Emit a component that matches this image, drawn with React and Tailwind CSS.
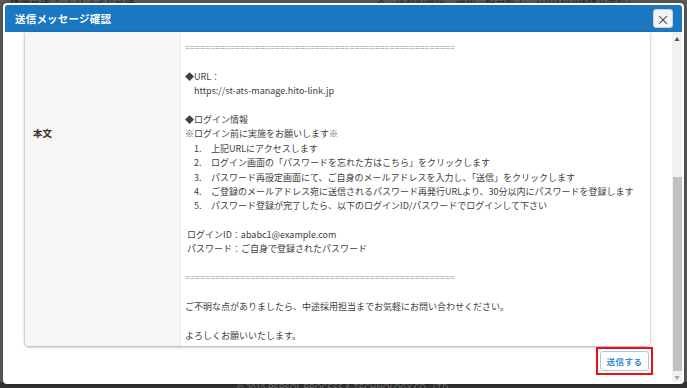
const EQ = '='.repeat(54);

const steps = [
  '上記URLにアクセスします',
  'ログイン画面の「パスワードを忘れた方はこちら」をクリックします',
  'パスワード再設定画面にて、ご自身のメールアドレスを入力し、「送信」をクリックします',
  'ご登録のメールアドレス宛に送信されるパスワード再発行URLより、30分以内にパスワードを登録します',
  'パスワード登録が完了したら、以下のログインID/パスワードでログインして下さい',
];

function Line({ children, className = '' }) {
  return <div className={`h-[14.4px] whitespace-nowrap ${className}`}>{children}</div>;
}

export default function App() {
  return (
    <div className="relative w-[687px] h-[388px] overflow-hidden bg-[#5b5b5b] font-['Noto_Sans_CJK_JP','Noto_Sans',sans-serif]">
      {/* page behind the overlay */}
      <div className="flex flex-col h-full">
        <div className="flex justify-between items-end h-[6px] px-[10px] text-[10px] leading-[12px] text-[#2b2b2b]">
          <span>採用管理 ・ アカウント管理</span>
          <span className="mr-[40px]">メール対応履歴　通知　担当者１　（HITO-Link株式会社）</span>
        </div>
        <div className="flex-1" />
        <div className="h-[6px] bg-[#333] text-[9px] leading-[12px] text-[#777] text-center">© 2015 PERSOL PROCESS &amp; TECHNOLOGY CO., LTD.</div>
      </div>

      {/* modal */}
      <div className="absolute left-[3px] top-[3px] w-[681px] h-[381px] bg-white rounded-[4px] p-[2px] flex flex-col shadow-[0_0_4px_rgba(0,0,0,0.4)]">
        <div className="h-[27px] shrink-0 bg-[#1a78c2] rounded-t-[3px] flex items-center justify-between pl-[10px] pr-[9px]">
          <span className="text-[10.5px] font-bold text-white tracking-[0.2px]">送信メッセージ確認</span>
          <button className="w-[20px] h-[19px] bg-[#f3f3f3] rounded-[3px] border border-[#d0d0d0] flex items-center justify-center text-[#333] text-[13px] leading-none">×</button>
        </div>

        <div className="flex-1 flex min-h-0">
          <div className="flex-1 flex flex-col pl-[20px] pr-[22px]">
            <div className="flex rounded-b-[4px] shadow-[0_1px_3px_rgba(0,0,0,0.35),-1px_0_2px_rgba(0,0,0,0.08)] overflow-hidden">
              <div className="w-[156px] shrink-0 bg-[#f7f6f5] border-r border-[#eceae8] pl-[8px] pt-[94px] text-[9.5px] font-bold text-[#333]">
                本文
              </div>
              <div className="flex-1 bg-white pl-[4px] pt-[9px] pb-[3px] text-[9px] leading-[14.4px] text-[#404040]">
                <Line className="text-[#8a8a8a]">{EQ}</Line>
                <Line />
                <Line>◆URL：</Line>
                <Line className="pl-[9px]">https://st-ats-manage.hito-link.jp</Line>
                <Line />
                <Line>◆ログイン情報</Line>
                <Line>※ログイン前に実施をお願いします※</Line>
                {steps.map((s, i) => (
                  <Line key={i} className="flex pl-[9px]">
                    <span className="w-[17px]">{i + 1}.</span>
                    <span>{s}</span>
                  </Line>
                ))}
                <Line />
                <Line className="pl-[2px]">ログインID：ababc1@example.com</Line>
                <Line className="pl-[2px]">パスワード：ご自身で登録されたパスワード</Line>
                <Line />
                <Line className="text-[#8a8a8a]">{EQ}</Line>
                <Line />
                <Line>ご不明な点がありましたら、中途採用担当までお気軽にお問い合わせください。</Line>
                <Line />
                <Line>よろしくお願いいたします。</Line>
              </div>
            </div>

            <div className="flex justify-end mt-[1px] -mr-[3px]">
              <div className="border-2 border-[#ee1111] p-[2px]">
                <button className="w-[49px] h-[20px] rounded-[3px] border border-[#9ccbee] bg-white text-[#3a8ad0] text-[8.5px] font-bold flex items-center justify-center tracking-[0.5px]">
                  送信する
                </button>
              </div>
            </div>
          </div>

          {/* scrollbar */}
          <div className="w-[10px] shrink-0 bg-[#f1f1f1] flex flex-col items-center">
            <div className="h-[14px] flex items-center justify-center text-[5px] text-[#505050]">▲</div>
            <div className="h-[131px]" />
            <div className="w-[9px] h-[194px] bg-[#c1c1c1]" />
            <div className="flex-1" />
            <div className="h-[11px] flex items-center justify-center text-[5px] text-[#a0a0a0]">▼</div>
          </div>
        </div>
      </div>
    </div>
  );
}
